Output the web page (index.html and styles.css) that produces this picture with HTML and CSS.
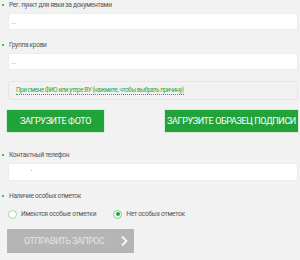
FILE: index.html
```html
<!DOCTYPE html>
<html lang="ru">
<head>
<meta charset="UTF-8">
<meta name="viewport" content="width=device-width, initial-scale=1.0">
<title>Заявка</title>
<link rel="stylesheet" href="styles.css">
</head>
<body>
    <form class="request">
        <div class="field">
            <label class="label required">Рег. пункт для явки за документами</label>
            <div class="input"><span class="placeholder">...</span></div>
        </div>

        <div class="field">
            <label class="label required">Группа крови</label>
            <div class="input"><span class="placeholder">...</span></div>
        </div>

        <div class="notice">
            <a class="notice-link">При смене ФИО или утере ВУ (нажмите, чтобы выбрать причину)</a>
        </div>

        <div class="uploads">
            <button type="button" class="btn-green photo">Загрузите фото</button>
            <button type="button" class="btn-green sign">Загрузите образец подписи</button>
        </div>

        <div class="field">
            <label class="label required">Контактный телефон</label>
            <div class="input tall"><span class="dot"></span></div>
        </div>

        <div class="field">
            <label class="label required">Наличие особых отметок</label>
            <div class="radios">
                <span class="radio"><span class="circle"></span>Имеются особые отметки</span>
                <span class="radio"><span class="circle checked"></span>Нет особых отметок</span>
            </div>
        </div>

        <button type="button" class="btn-submit">
            Отправить запрос
            <svg class="chevron" width="8" height="12" viewBox="0 0 8 12">
                <polyline points="2,1.5 6.5,6 2,10.5" fill="none" stroke="#f6f6f6" stroke-width="1.8"/>
            </svg>
        </button>
    </form>
</body>
</html>
```

FILE: styles.css
```css
body {
    margin: 0;
    background: #f2f2f2;
    font-family: 'Roboto', sans-serif;
    color: #555;
}

.request {
    padding: 0 2px 0 8px;
}

.field {
    margin-bottom: 10px;
}

.label {
    display: block;
    position: relative;
    font-size: 6.6px;
    letter-spacing: -0.3px;
    line-height: 10px;
    height: 13px;
    padding-left: 1px;
    color: #555;
}

.required::before {
    content: '';
    position: absolute;
    left: -6px;
    top: 4px;
    width: 2px;
    height: 2px;
    background: #3cbf50;
}

.input {
    height: 17px;
    background: #fff;
    border: 1px solid #ececec;
    border-radius: 2px;
    box-sizing: border-box;
    position: relative;
}

.input.tall {
    height: 18px;
}

.placeholder {
    position: absolute;
    left: 2px;
    top: 3px;
    font-size: 7px;
    line-height: 10px;
    color: #999;
}

.dot {
    position: absolute;
    left: 22px;
    top: 6px;
    width: 1px;
    height: 1px;
    background: #bbb;
}

.notice {
    margin-top: 11px;
    height: 19px;
    border: 1px solid #e6e6e6;
    border-radius: 3px;
    box-sizing: border-box;
    padding: 0 0 0 7px;
    font-size: 6.3px;
    letter-spacing: -0.42px;
    line-height: 17px;
}

.notice-link {
    color: #2aa63c;
    border-bottom: 1px dotted #2aa63c;
}

.uploads {
    display: flex;
    justify-content: space-between;
    margin: 10px 0 18px -1px;
}

.btn-green {
    height: 22px;
    border: none;
    background: #22a33a;
    color: #fff;
    font-family: inherit;
    font-size: 9px;
    letter-spacing: -0.38px;
    text-transform: uppercase;
    white-space: nowrap;
    padding: 0;
    box-shadow: 0 0 0 1px #d4ecd8;
}

.photo {
    width: 97px;
}

.sign {
    width: 133px;
}

.radios {
    display: flex;
    gap: 17px;
    padding-top: 5px;
}

.radio {
    display: flex;
    align-items: center;
    gap: 4px;
    font-size: 6.6px;
    letter-spacing: -0.25px;
    line-height: 10px;
    color: #555;
}

.circle {
    width: 7px;
    height: 7px;
    border: 1px solid #92de9b;
    border-radius: 50%;
    background: #fff;
    position: relative;
}

.circle.checked {
    border-color: #6fd07c;
}

.circle.checked::after {
    content: '';
    position: absolute;
    left: 1.5px;
    top: 1.5px;
    width: 4px;
    height: 4px;
    border-radius: 50%;
    background: #1fa33a;
}

.btn-submit {
    display: block;
    margin: 7px 0 0 -1px;
    width: 127px;
    height: 24px;
    border: none;
    background: #b5b5b5;
    color: #e4e4e4;
    font-family: inherit;
    font-size: 8.8px;
    letter-spacing: -0.45px;
    text-transform: uppercase;
    white-space: nowrap;
    text-align: left;
    padding: 0 0 0 17px;
    position: relative;
}

.chevron {
    position: absolute;
    right: 6px;
    top: 6px;
}
```
